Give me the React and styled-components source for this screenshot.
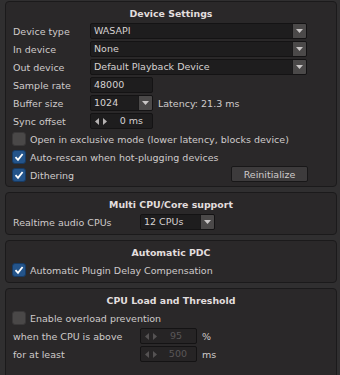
import React from "react";
import styled, { createGlobalStyle } from "styled-components";

const Global = createGlobalStyle`
  html, body {
    margin: 0;
    padding: 0;
    background: #302f30;
    overflow: hidden;
  }
  body {
    font-family: "DejaVu Sans", "Liberation Sans", sans-serif;
    font-size: 9.5px;
    color: #cfcbcb;
  }
`;

const Page = styled.div`
  width: 340px;
  height: 375px;
  padding: 1px 3px 0 5px;
  box-sizing: border-box;
  display: flex;
  flex-direction: column;
  gap: 5px;
`;

const Panel = styled.section`
  background: #2a2829;
  border: 1px solid #1b1a1b;
  border-radius: 4px;
  padding: 5px 28px ${(p) => p.$bottom || 4}px 6px;
  display: flex;
  flex-direction: column;
  gap: 2px;
  flex-shrink: 0;
`;

const Title = styled.div`
  font-weight: bold;
  font-size: 9.4px;
  color: #e2dede;
  text-align: center;
  height: 14px;
  line-height: 14px;
  margin-left: 22px;
`;

const Row = styled.div`
  display: grid;
  grid-template-columns: ${(p) => p.$label || 73}px auto 1fr;
  align-items: center;
  height: 16px;
  column-gap: 5px;
`;

const Label = styled.span`
  padding-left: 1px;
  white-space: nowrap;
`;

const Field = styled.div`
  display: flex;
  align-items: stretch;
  height: 16px;
  box-sizing: border-box;
  width: ${(p) => (p.$width ? `${p.$width}px` : "auto")};
  background: ${(p) => (p.$disabled ? "#262425" : "#1e1d1e")};
  border: 1px solid #141314;
  border-radius: 2px;
  overflow: hidden;
`;

const FieldText = styled.span`
  flex: 1;
  padding-left: 3px;
  line-height: 14px;
  white-space: nowrap;
  color: #d6d2d2;
`;

const DropButton = styled.span`
  width: 13px;
  background: #4b4949;
  border-left: 1px solid #1a191a;
  display: flex;
  align-items: center;
  justify-content: center;
`;

const Arrows = styled.span`
  display: flex;
  align-items: center;
  gap: 4px;
  padding-left: 4px;
`;

const SpinValue = styled.span`
  flex: 1;
  text-align: right;
  padding-right: ${(p) => p.$pad || 4}px;
  line-height: 14px;
  color: ${(p) => (p.$disabled ? "#5a5758" : "#d6d2d2")};
`;

const Aside = styled.span`
  white-space: nowrap;
`;

const CheckRow = styled.label`
  display: flex;
  align-items: center;
  gap: 4px;
  height: 16px;
  white-space: nowrap;
`;

const Box = styled.span`
  width: 14px;
  height: 14px;
  box-sizing: border-box;
  border-radius: 3px;
  display: flex;
  align-items: center;
  justify-content: center;
  background: ${(p) => (p.$on ? "#24548a" : "#4a4848")};
  border: 1px solid ${(p) => (p.$on ? "#173a63" : "#3a3839")};
`;

const ButtonRow = styled.div`
  display: flex;
  align-items: center;
  justify-content: space-between;
  height: 16px;
`;

const Button = styled.button`
  width: 77px;
  height: 16px;
  margin-top: -2px;
  padding: 0;
  font-family: inherit;
  font-size: 9.5px;
  color: #cfcbcb;
  background: #3d3b3c;
  border: 1px solid #181718;
  border-radius: 2px;
`;

const Tri = ({ dir = "down", color = "#c9c6c6" }) => {
  const pts = {
    down: "0,0 7,0 3.5,4",
    left: "4,0 4,7 0,3.5",
    right: "0,0 0,7 4,3.5",
  }[dir];
  const w = dir === "down" ? 7 : 4;
  const h = dir === "down" ? 4 : 7;
  return (
    <svg width={w} height={h} viewBox={`0 0 ${w} ${h}`}>
      <polygon points={pts} fill={color} />
    </svg>
  );
};

const Check = () => (
  <svg width="10" height="10" viewBox="0 0 10 10">
    <path d="M1.5 5.2 L4 7.8 L8.6 2" stroke="#fff" strokeWidth="1.8" fill="none" />
  </svg>
);

const Select = ({ value, width }) => (
  <Field $width={width}>
    <FieldText>{value}</FieldText>
    <DropButton>
      <Tri />
    </DropButton>
  </Field>
);

const Spin = ({ value, width, disabled, pad }) => (
  <Field $width={width} $disabled={disabled}>
    <Arrows>
      <Tri dir="left" color={disabled ? "#555253" : "#b5b2b2"} />
      <Tri dir="right" color={disabled ? "#555253" : "#b5b2b2"} />
    </Arrows>
    <SpinValue $disabled={disabled} $pad={pad}>
      {value}
    </SpinValue>
  </Field>
);

const CheckItem = ({ on, children }) => (
  <CheckRow>
    <Box $on={on}>{on && <Check />}</Box>
    {children}
  </CheckRow>
);

export default function App() {
  return (
    <Page>
      <Global />
      <Panel $bottom={3}>
        <Title>Device Settings</Title>
        <Row>
          <Label>Device type</Label>
          <Select value="WASAPI" width={217} />
        </Row>
        <Row>
          <Label>In device</Label>
          <Select value="None" width={217} />
        </Row>
        <Row>
          <Label>Out device</Label>
          <Select value="Default Playback Device" width={217} />
        </Row>
        <Row>
          <Label>Sample rate</Label>
          <Field $width={63}>
            <FieldText>48000</FieldText>
          </Field>
        </Row>
        <Row>
          <Label>Buffer size</Label>
          <Select value="1024" width={63} />
          <Aside>Latency: 21.3 ms</Aside>
        </Row>
        <Row>
          <Label>Sync offset</Label>
          <Spin value="0 ms" width={63} pad={9} />
        </Row>
        <CheckItem>Open in exclusive mode (lower latency, blocks device)</CheckItem>
        <CheckItem on>Auto-rescan when hot-plugging devices</CheckItem>
        <ButtonRow>
          <CheckItem on>Dithering</CheckItem>
          <Button>Reinitialize</Button>
        </ButtonRow>
      </Panel>

      <Panel $bottom={4}>
        <Title>Multi CPU/Core support</Title>
        <Row $label={123}>
          <Label>Realtime audio CPUs</Label>
          <Select value="12 CPUs" width={75} />
        </Row>
      </Panel>

      <Panel $bottom={4}>
        <Title>Automatic PDC</Title>
        <CheckItem on>Automatic Plugin Delay Compensation</CheckItem>
      </Panel>

      <Panel $bottom={20}>
        <Title>CPU Load and Threshold</Title>
        <CheckItem>Enable overload prevention</CheckItem>
        <Row $label={123}>
          <Label>when the CPU is above</Label>
          <Spin value="95" width={57} pad={14} disabled />
          <Aside>%</Aside>
        </Row>
        <Row $label={123}>
          <Label>for at least</Label>
          <Spin value="500" width={57} pad={9} disabled />
          <Aside>ms</Aside>
        </Row>
      </Panel>
    </Page>
  );
}
